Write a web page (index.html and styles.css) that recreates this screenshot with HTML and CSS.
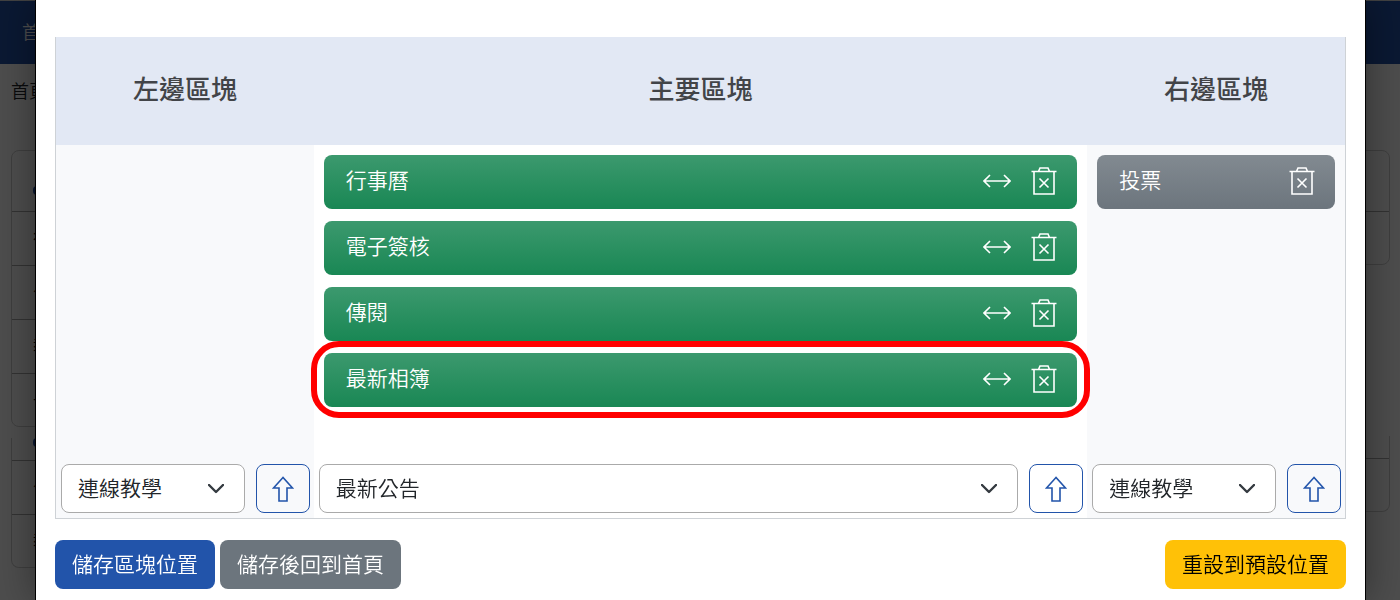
FILE: index.html
```html
<!DOCTYPE html>
<html lang="zh-Hant">
<head>
<meta charset="utf-8">
<meta name="viewport" content="width=device-width, initial-scale=1">
<title>區塊位置</title>
<link rel="stylesheet" href="styles.css">
</head>
<body>
<svg class="sprite" aria-hidden="true">
  <symbol id="resize" viewBox="0 0 28 14"><path d="M1 7h26M7 1L1 7l6 6M21 1l6 6-6 6"/></symbol>
  <symbol id="trash" viewBox="0 0 26 30"><path d="M.5 5.500h25M3 5.500v22.500h20v-22.500M7.500 5.500l1.500-3.500h8l1.500 3.500M8.500 12.500l9 9M17.500 12.500l-9 9"/></symbol>
  <symbol id="up" viewBox="0 0 22 26"><path d="M11 1.500L1.500 12h5.500v13h8v-13h5.500z"/></symbol>
  <symbol id="chevron" viewBox="0 0 16 10"><path d="M1 1l7 7 7-7"/></symbol>
</svg>

<div class="page" aria-hidden="true">
  <div class="nav">首頁</div>
  <div class="crumb">首頁</div>
  <div class="columns">
    <div class="side">
      <div class="card"><div class="card-head"><i class="dot"></i></div><div class="row">行</div><div class="row">公</div><div class="row">教</div><div class="row">一</div></div>
      <div class="card card-cut"><div class="strip"><i class="dot"></i></div><div class="row">公</div><div class="row">教</div></div>
    </div>
    <div class="side side-end">
      <div class="card"><div class="card-head"></div><div class="row"></div></div>
      <div class="card card-cut"><div class="strip"></div><div class="row"></div></div>
    </div>
  </div>
</div>

<div class="backdrop">
  <main class="modal" role="dialog" aria-label="區塊位置">
    <div class="board">
      <section class="col tinted">
        <h2 class="col-title">左邊區塊</h2>
        <ul class="items"></ul>
        <div class="adder">
          <div class="picker"><select class="select" aria-label="左邊區塊"><option>連線教學</option></select><svg class="chevron"><use href="#chevron"/></svg></div>
          <button class="add" type="button" aria-label="加入左邊區塊"><svg class="up"><use href="#up"/></svg></button>
        </div>
      </section>
      <section class="col">
        <h2 class="col-title">主要區塊</h2>
        <ul class="items">
          <li class="item"><span class="name">行事曆</span><button class="tool" type="button" aria-label="寬度"><svg class="resize"><use href="#resize"/></svg></button><button class="tool" type="button" aria-label="刪除"><svg class="trash"><use href="#trash"/></svg></button></li>
          <li class="item"><span class="name">電子簽核</span><button class="tool" type="button" aria-label="寬度"><svg class="resize"><use href="#resize"/></svg></button><button class="tool" type="button" aria-label="刪除"><svg class="trash"><use href="#trash"/></svg></button></li>
          <li class="item"><span class="name">傳閱</span><button class="tool" type="button" aria-label="寬度"><svg class="resize"><use href="#resize"/></svg></button><button class="tool" type="button" aria-label="刪除"><svg class="trash"><use href="#trash"/></svg></button></li>
          <li class="item marked"><span class="name">最新相簿</span><button class="tool" type="button" aria-label="寬度"><svg class="resize"><use href="#resize"/></svg></button><button class="tool" type="button" aria-label="刪除"><svg class="trash"><use href="#trash"/></svg></button></li>
        </ul>
        <div class="adder">
          <div class="picker"><select class="select" aria-label="主要區塊"><option>最新公告</option></select><svg class="chevron"><use href="#chevron"/></svg></div>
          <button class="add" type="button" aria-label="加入主要區塊"><svg class="up"><use href="#up"/></svg></button>
        </div>
      </section>
      <section class="col tinted">
        <h2 class="col-title">右邊區塊</h2>
        <ul class="items">
          <li class="item muted"><span class="name">投票</span><button class="tool" type="button" aria-label="刪除"><svg class="trash"><use href="#trash"/></svg></button></li>
        </ul>
        <div class="adder">
          <div class="picker"><select class="select" aria-label="右邊區塊"><option>連線教學</option></select><svg class="chevron"><use href="#chevron"/></svg></div>
          <button class="add" type="button" aria-label="加入右邊區塊"><svg class="up"><use href="#up"/></svg></button>
        </div>
      </section>
    </div>
    <div class="actions">
      <button class="btn primary" type="button">儲存區塊位置</button>
      <button class="btn secondary" type="button">儲存後回到首頁</button>
      <button class="btn warning" type="button">重設到預設位置</button>
    </div>
  </main>
</div>
</body>
</html>
```

FILE: styles.css
```css
* { box-sizing: border-box; }
body {
  margin: 0;
  height: 100vh;
  overflow: hidden;
  background: #fff;
  color: #212529;
  font: 350 21px/30px "Noto Sans CJK TC", "Liberation Sans", sans-serif;
}
button, select { font: inherit; color: inherit; }
svg { display: block; fill: none; stroke: currentColor; }
.sprite { position: absolute; width: 0; height: 0; }

/* page under the dialog */
.page { border-top: 1px solid #d8d8d8; font-size: 18px; }
.nav { padding: 15px 22px 18px; background: #2251a8; color: #fff; }
.crumb { padding: 11px 11px 45px; }
.columns { display: flex; justify-content: space-between; padding: 0 10px 0 11px; }
.side { width: 260px; }
.card { border: 1px solid #cfcfcf; border-radius: 8px; }
.card-cut { margin-top: 11px; border-top: 0; border-radius: 0 0 8px 8px; }
.side-end .card-cut { margin-top: 171px; }
.card-head { height: 60px; padding: 35px 21px 0; }
.strip { height: 22px; padding: 0 21px; }
.dot { display: block; width: 10px; height: 9px; border-radius: 4px; background: #2251a8; }
.row { height: 54px; padding: 10px 21px; border-top: 1px solid #a8a8a8; }
.row:last-child { height: 53px; }

/* dialog */
.backdrop { position: fixed; inset: 0; padding: 0 34px 0 35px; background: rgba(0, 0, 0, .7); }
.modal {
  height: 100%;
  padding: 37px 19px 11px;
  background: #fff;
  border: solid #000;
  border-width: 0 1px;
  box-shadow: 0 0 36px rgba(0, 0, 0, .4);
}
.board {
  display: grid;
  grid-template-columns: 1fr 3fr 1fr;
  border: 1px solid #ced2d6;
  border-top: 0;
}
.col { display: flex; flex-direction: column; min-width: 0; }
.tinted { background: #f8f9fb; }
.col-title {
  margin: 0;
  padding: 33px 0 39px;
  background: #e2e8f4;
  color: #424448;
  font-size: 26px;
  line-height: 36px;
  font-weight: 500;
  text-align: center;
}
.items {
  display: flex;
  flex: 1;
  flex-direction: column;
  gap: 12px;
  min-height: 319px;
  margin: 0;
  padding: 10px;
  list-style: none;
}
.item {
  position: relative;
  display: flex;
  align-items: center;
  gap: 20px;
  height: 54px;
  padding: 0 20px 2px 22px;
  border-radius: 8px;
  background: linear-gradient(#3c996e, #198754);
  color: #fff;
}
.muted { background: linear-gradient(#828a91, #6c757d); }
.name { flex: 1; padding-bottom: 4px; }
.marked::after {
  content: "";
  position: absolute;
  inset: -12px -13px -11px;
  border: 6px solid #f00;
  border-radius: 28px;
  pointer-events: none;
}
.tool { padding: 0; border: 0; background: none; }
.resize { width: 28px; height: 14px; stroke-width: 1.6; }
.trash { width: 26px; height: 30px; stroke-width: 1.6; }
.adder { display: flex; gap: 11px; padding: 0 4px 5px 5px; }
.picker { display: grid; flex: 1; align-items: center; min-width: 0; }
.picker > * { grid-area: 1 / 1; }
.select {
  width: 100%;
  height: 49px;
  padding: 0 40px 4px 16px;
  appearance: none;
  border: 1px solid #aaa;
  border-radius: 8px;
  background: #fff;
}
.chevron { width: 16px; height: 10px; margin-right: 21px; justify-self: end; color: #343a40; stroke-width: 2.4; stroke-linecap: round; stroke-linejoin: round; overflow: visible; pointer-events: none; }
.add {
  display: grid;
  place-items: center;
  width: 54px;
  height: 49px;
  padding: 0;
  border: 1px solid #2254aa;
  border-radius: 8px;
  background: none;
  color: #2254aa;
}
.up { width: 22px; height: 26px; stroke-width: 1.6; }
.actions { display: flex; gap: 5px; padding-top: 21px; }
.btn { height: 49px; padding: 0 17px 4px; border: 0; border-radius: 8px; color: #fff; }
.primary { background: #2254aa; }
.secondary { background: #6c757d; }
.warning { margin-left: auto; background: #ffc107; color: #000; }
```
